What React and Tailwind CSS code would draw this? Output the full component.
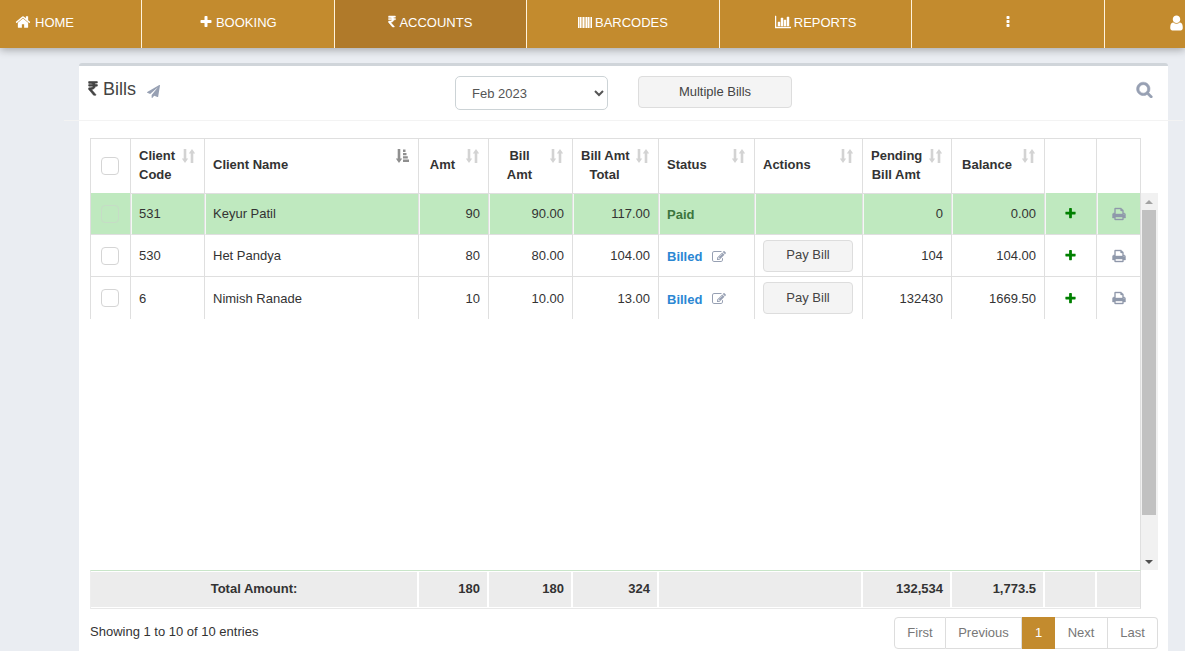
import React from "react";

const PATHS = {
  home: "M1472 992v480q0 26-19 45t-45 19h-384v-384h-256v384h-384q-26 0-45-19t-19-45v-480q0-1 .5-3t.5-3l575-474 575 474q1 2 1 6zm223-69l-62 74q-8 9-21 11h-3q-13 0-21-7l-692-577-692 577q-12 8-24 7-13-2-21-11l-62-74q-8-10-7-23.5t11-21.5l719-599q32-26 76-26t76 26l244 204v-195q0-14 9-23t23-9h192q14 0 23 9t9 23v408l219 182q10 8 11 21.5t-7 23.5z",
  plus: "M1600 736v192q0 40-28 68t-68 28h-416v416q0 40-28 68t-68 28h-192q-40 0-68-28t-28-68v-416h-416q-40 0-68-28t-28-68v-192q0-40 28-68t68-28h416v-416q0-40 28-68t68-28h192q40 0 68 28t28 68v416h416q40 0 68 28t28 68z",
  rupee: "M1345 470v102q0 14-9 23t-23 9h-168q-23 144-129 234t-276 110q167 178 459 536 14 16 4 34-8 18-29 18h-195q-16 0-25-12-306-367-498-571-9-9-9-22v-127q0-13 9.5-22.5t22.5-9.5h112q132 0 212.5-43t102.5-125h-427q-14 0-23-9t-9-23v-102q0-14 9-23t23-9h413q-57-113-268-113h-145q-13 0-22.5-9.5t-9.5-22.5v-133q0-14 9-23t23-9h832q14 0 23 9t9 23v102q0 14-9 23t-23 9h-233q47 61 64 144h171q14 0 23 9t9 23z",
  search: "M1216 832q0-185-131.5-316.5t-316.5-131.5-316.5 131.5-131.5 316.5 131.5 316.5 316.5 131.5 316.5-131.5 131.5-316.5zm512 832q0 52-38 90t-90 38q-54 0-90-38l-343-342q-179 124-399 124-143 0-273.5-55.5t-225-150-150-225-55.5-273.5 55.5-273.5 150-225 225-150 273.5-55.5 273.5 55.5 225 150 150 225 55.5 273.5q0 220-124 399l343 343q37 37 37 90z",
  plane: "M1764 11q33 24 27 64l-256 1536q-5 29-32 45-14 8-31 8-11 0-24-5l-453-185-242 295q-18 23-49 23-13 0-22-4-19-7-30.5-23.5t-11.5-36.5v-349l864-1059-1069 925-395-162q-37-14-40-55-2-40 32-59l1664-960q15-9 32-9 20 0 36 11z",
  chart: "M640 896v512h-256v-512h256zm384-512v1024h-256v-1024h256zm1024 1152v128h-2048v-1536h128v1408h1920zm-640-896v768h-256v-768h256zm384-384v1152h-256v-1152h256z",
  user: "M1536 1399q0 109-62.5 187t-150.5 78h-854q-88 0-150.5-78t-62.5-187q0-85 8.5-160.5t31.5-152 58.5-131 94-89 134.5-34.5q131 128 313 128t313-128q76 0 134.5 34.5t94 89 58.5 131 31.5 152 8.5 160.5zm-256-887q0 159-112.5 271.5t-271.5 112.5-271.5-112.5-112.5-271.5 112.5-271.5 271.5-112.5 271.5 112.5 112.5 271.5z",
  dots: "M1088 1248v192q0 40-28 68t-68 28h-192q-40 0-68-28t-28-68v-192q0-40 28-68t68-28h192q40 0 68 28t28 68zm0-512v192q0 40-28 68t-68 28h-192q-40 0-68-28t-28-68v-192q0-40 28-68t68-28h192q40 0 68 28t28 68zm0-512v192q0 40-28 68t-68 28h-192q-40 0-68-28t-28-68v-192q0-40 28-68t68-28h192q40 0 68 28t28 68z",
  print: "M448 1536h896v-256h-896v256zm0-640h896v-384h-160q-40 0-68-28t-28-68v-160h-640v640zm1152 64q0-26-19-45t-45-19-45 19-19 45 19 45 45 19 45-19 19-45zm128 0v416q0 13-9.5 22.5t-22.5 9.5h-224v160q0 40-28 68t-68 28h-960q-40 0-68-28t-28-68v-160h-224q-13 0-22.5-9.5t-9.5-22.5v-416q0-79 56.5-135.5t135.5-56.5h64v-544q0-40 28-68t68-28h672q40 0 88 20t76 48l152 152q28 28 48 76t20 88v256h64q79 0 135.5 56.5t56.5 135.5z",
  edit: "M888 1184l116-116-152-152-116 116v56h96v96h56zm440-720q-16-16-33 1l-350 350q-17 17-1 33t33-1l350-350q17-17 1-33zm80 594v190q0 119-84.5 203.5t-203.5 84.5h-832q-119 0-203.5-84.5t-84.5-203.5v-832q0-119 84.5-203.5t203.5-84.5h832q63 0 117 25 15 7 18 23 3 17-9 29l-49 49q-14 14-32 8-23-6-45-6h-832q-66 0-113 47t-47 113v832q0 66 47 113t113 47h832q66 0 113-47t47-113v-126q0-13 9-22l64-64q15-15 35-7t20 29zm-96-738l288 288-672 672h-288v-288zm444 132l-92 92-288-288 92-92q28-28 68-28t68 28l152 152q28 28 28 68t-28 68z",
};

function Icon({ name, box = "0 0 1792 1792", className, weight = 0 }) {
  return (
    <svg
      viewBox={box}
      className={`shrink-0 ${className}`}
      fill="currentColor"
      stroke="currentColor"
      strokeWidth={weight}
      aria-hidden="true"
    >
      <path d={PATHS[name]} />
    </svg>
  );
}

function Barcode() {
  return (
    <svg viewBox="0 0 14 11" className="h-[11px] w-[14px] shrink-0" fill="currentColor" aria-hidden="true">
      <path fillOpacity="0.55" d="M0 0h14v11H0z" />
      <path d="M0 0h1v11H0zM2 0h1v11H2zM5 0h1v11H5zM8 0h1v11H8zM10 0h1v11h-1zM13 0h1v11h-1z" />
    </svg>
  );
}

function SortIcon({ active }) {
  return (
    <svg
      viewBox="0 0 13 14"
      className={`absolute top-2.5 right-[9px] h-3.5 w-[13px] ${active ? "text-[#8f8f8f]" : "text-[#d3d3d3]"}`}
      fill="currentColor"
      aria-hidden="true"
    >
      <path d="M1.700 0h2.600v9.500H6.200L3 14-.2 9.500H1.700z" />
      {active ? (
        <path d="M7 .5h2.500v2.500H7zM7 4h3.500v2.300H7zM7 7.200h4.800v2.300H7zM7 10.500h6V13H7z" />
      ) : (
        <path d="M8.700 14h2.600V4.500h1.900L10 0 6.800 4.500h1.900z" />
      )}
    </svg>
  );
}

const NAV = [
  { label: "BOOKING", icon: <Icon name="plus" className="size-[14px]" /> },
  { label: "ACCOUNTS", icon: <Icon name="rupee" box="384 0 1024 1792" weight={60} className="h-[14px] w-[8px]" />, active: true },
  { label: "BARCODES", icon: <Barcode /> },
  { label: "REPORTS", icon: <Icon name="chart" box="0 0 2048 1792" weight={60} className="h-[14px] w-[16px]" /> },
  { label: "", icon: <Icon name="dots" className="size-[14px]" />, aria: "More" },
];

const COLUMNS = [
  { lines: ["Client", "Code"] },
  { lines: ["Client Name"], active: true },
  { lines: ["Amt"], center: true },
  { lines: ["Bill", "Amt"], center: true },
  { lines: ["Bill Amt", "Total"], center: true },
  { lines: ["Status"] },
  { lines: ["Actions"] },
  { lines: ["Pending", "Bill Amt"], center: true },
  { lines: ["Balance"], center: true },
];

const ROWS = [
  { code: "531", name: "Keyur Patil", amt: "90", bill: "90.00", total: "117.00", paid: true, pending: "0", balance: "0.00" },
  { code: "530", name: "Het Pandya", amt: "80", bill: "80.00", total: "104.00", pending: "104", balance: "104.00" },
  { code: "6", name: "Nimish Ranade", amt: "10", bill: "10.00", total: "13.00", pending: "132430", balance: "1669.50" },
];

function Cols({ first = "w-[40px]", last = "w-[43px]" }) {
  return (
    <colgroup>
      <col className={first} />
      <col className="w-[74px]" />
      <col />
      <col className="w-[70px]" />
      <col className="w-[84px]" />
      <col className="w-[86px]" />
      <col className="w-[96px]" />
      <col className="w-[108px]" />
      <col className="w-[89px]" />
      <col className="w-[93px]" />
      <col className="w-[52px]" />
      <col className={last} />
    </colgroup>
  );
}

function Check({ label, faint }) {
  return (
    <input
      type="checkbox"
      aria-label={label}
      className={`block size-[18px] appearance-none rounded-[4px] border ${
        faint ? "border-[#c6dcc6]" : "border-[#d5d5d5] bg-white"
      }`}
    />
  );
}

const TABLE = "w-full table-fixed border-separate border-spacing-0";
const GRAY_BTN = "h-8 rounded-[4px] border border-[#dddddd] bg-[#f4f4f4] pb-0.5 text-[#444444]";
const PAGE = "h-8 border-r border-[#dddddd] pb-0.5 text-center text-[#777777]";

export default function App() {
  return (
    <div className="flex min-h-screen flex-col bg-[#eaedf2] font-['Liberation_Sans',Arial,sans-serif] text-[13px] leading-[19px] text-[#333333]">
      <nav className="flex h-12 overflow-hidden bg-[#c38b2e] text-white shadow-[0_2px_8px_rgba(0,0,0,0.3)]">
        <a href="#home" className="flex w-[142px] shrink-0 items-center gap-1 border-r border-[#fff3dc] pb-1 pl-[15px]">
          <Icon name="home" className="size-[16px]" />
          HOME
        </a>
        {NAV.map((n, i) => (
          <a
            key={i}
            href="#nav"
            aria-label={n.aria}
            className={`flex flex-1 items-center justify-center gap-[3px] border-r border-[#fff3dc] pb-1 ${n.active ? "bg-[#b07a2a]" : ""}`}
          >
            {n.icon}
            {n.label}
          </a>
        ))}
        <a href="#profile" aria-label="Profile" className="flex w-20 shrink-0 items-center pb-0.5 pl-16">
          <Icon name="user" box="128 0 1536 1792" className="h-[18px] w-[15px]" />
        </a>
      </nav>

      <main className="mt-[15px] mr-[17px] ml-[79px] flex-1 rounded-t-[3px] border-t-[3px] border-[#d0d5da] bg-white">
        <header className="-mx-[15px] flex items-start border-b border-[#f3f3f3] px-6 pt-2.5 pb-2.5">
          <h1 className="flex h-[26px] w-[367px] shrink-0 items-center text-[18px] text-[#444444]">
            <Icon name="rupee" box="384 0 1024 1792" weight={60} className="h-[18px] w-[10px]" />
            <span className="ml-[5px]">Bills</span>
            <Icon name="plane" className="mt-1 ml-[11px] size-[13px] text-[#97a0b3]" />
          </h1>
          <select
            aria-label="Month"
            className="h-[34px] w-[153px] rounded-[5px] border border-[#ccd3d6] bg-white pl-3 text-[#555555]"
          >
            <option>Feb 2023</option>
          </select>
          <button className={`ml-[30px] w-[154px] ${GRAY_BTN}`}>Multiple Bills</button>
          <button aria-label="Search" className="mt-[5px] mr-1.5 ml-auto text-[#97a0b3]">
            <Icon name="search" className="size-[17px]" weight={60} />
          </button>
        </header>

        <section className="pt-[17px] pr-[10px] pl-[11px]">
          <div className="mr-[17px]">
            <table className={`${TABLE} border-l border-[#dfdfdf]`}>
              <Cols last="w-[44px]" />
              <thead>
                <tr className="h-14">
                  <th className="border-t border-r border-b border-[#dfdfdf] pl-2.5">
                    <Check label="Select all" />
                  </th>
                  {COLUMNS.map((c, i) => (
                    <th
                      key={i}
                      className={`relative border-t border-r border-b border-[#dfdfdf] pr-[30px] pb-[3px] pl-2 font-bold whitespace-nowrap ${
                        c.center ? "text-center" : "text-left"
                      }`}
                    >
                      {c.lines.map((l) => (
                        <div key={l}>{l}</div>
                      ))}
                      <SortIcon active={c.active} />
                    </th>
                  ))}
                  <th className="border-t border-r border-b border-[#dfdfdf]" />
                  <th className="border-t border-r border-b border-[#dfdfdf]" />
                </tr>
              </thead>
            </table>
          </div>

          <div className="-mt-px flex h-[377px]">
            <div className="min-w-0 flex-1 border-r border-[#dfdfdf]">
              <table className={`${TABLE} border-l border-[#dfdfdf]`}>
                <Cols />
                <tbody>
                  {ROWS.map((r, i) => {
                    const bottom = i < 2 ? "border-b" : "";
                    const cell = `border-r border-[#dfdfdf] pr-2 ${bottom} ${
                      r.paid ? "border-l border-l-[#f4f9f4] pl-[7px]" : "pl-2"
                    }`;
                    return (
                      <tr key={r.code} className={`h-[42px] ${r.paid ? "bg-[#bfe9bf]" : ""}`}>
                        <td className={`border-r border-[#dfdfdf] pl-2.5 ${bottom}`}>
                          <Check label={`Select ${r.name}`} faint={r.paid} />
                        </td>
                        <td className={cell}>{r.code}</td>
                        <td className={cell}>{r.name}</td>
                        <td className={`${cell} text-right`}>{r.amt}</td>
                        <td className={`${cell} text-right`}>{r.bill}</td>
                        <td className={`${cell} text-right`}>{r.total}</td>
                        <td className={`${cell} pt-0.5`}>
                          {r.paid ? (
                            <span className="font-bold text-[#3c763d]">Paid</span>
                          ) : (
                            <span className="flex items-center gap-2.5">
                              <a href="#bill" className="font-bold text-[#2b87d3]">Billed</a>
                              <button aria-label={`Edit ${r.name}`} className="text-[#97a0b3]">
                                <Icon name="edit" className="size-[14px]" />
                              </button>
                            </span>
                          )}
                        </td>
                        <td className={cell}>
                          {!r.paid && <button className={`block w-[90px] ${GRAY_BTN}`}>Pay Bill</button>}
                        </td>
                        <td className={`${cell} text-right`}>{r.pending}</td>
                        <td className={`${cell} text-right`}>{r.balance}</td>
                        <td className={cell}>
                          <button aria-label={`Add for ${r.name}`} className="mx-auto block text-[#008000]">
                            <Icon name="plus" className="size-[13px]" />
                          </button>
                        </td>
                        <td className={`border-[#dfdfdf] ${bottom} ${r.paid ? "border-l border-l-[#f4f9f4]" : ""}`}>
                          <button aria-label={`Print ${r.name}`} className="mx-auto block text-[#8f99ab]">
                            <Icon name="print" className="size-[14px]" weight={50} />
                          </button>
                        </td>
                      </tr>
                    );
                  })}
                </tbody>
              </table>
            </div>
            <div className="flex w-[17px] flex-col items-center bg-[#f1f1f1] pr-px">
              <svg viewBox="0 0 16 17" className="h-[17px] w-4 shrink-0" fill="#a3a3a3" aria-hidden="true">
                <path d="M4 11l4-4 4 4z" />
              </svg>
              <div className="h-[305px] w-3.5 bg-[#c1c1c1]" />
              <svg viewBox="0 0 16 17" className="mt-auto h-[17px] w-4 shrink-0" fill="#505050" aria-hidden="true">
                <path d="M4 7l4 4 4-4z" />
              </svg>
            </div>
          </div>

          <div className="mr-[17px] border border-t-[#c9e5c9] border-r-[#dfdfdf] border-b-[#e8e8e8] border-l-[#eeeeee]">
            <table className={TABLE}>
              <Cols />
              <tbody>
                <tr className="h-[37px] bg-[#ececec] text-right font-bold">
                  <td colSpan={3} className="border-y border-r-2 border-white pb-0.5 text-center">Total Amount:</td>
                  <td className="border-y border-r-2 border-white pr-[7px] pb-0.5">180</td>
                  <td className="border-y border-r-2 border-white pr-[7px] pb-0.5">180</td>
                  <td className="border-y border-r-2 border-white pr-[7px] pb-0.5">324</td>
                  <td colSpan={2} className="border-y border-r-2 border-white" />
                  <td className="border-y border-r-2 border-white pr-[7px] pb-0.5">132,534</td>
                  <td className="border-y border-r-2 border-white pr-[7px] pb-0.5">1,773.5</td>
                  <td className="border-y border-r-2 border-white" />
                  <td className="border-y border-white" />
                </tr>
              </tbody>
            </table>
          </div>

          <div className="mt-2 flex items-center justify-between">
            <p className="pb-[3px]">Showing 1 to 10 of 10 entries</p>
            <div className="flex">
              <button className={`${PAGE} w-[52px] rounded-l-[4px] border-y border-l`}>First</button>
              <button className={`${PAGE} w-[76px] border-y`}>Previous</button>
              <button className="h-8 w-[33px] bg-[#c38b2e] pb-0.5 text-center text-white">1</button>
              <button className={`${PAGE} w-[53px] border-y`}>Next</button>
              <button className={`${PAGE} w-[50px] rounded-r-[4px] border-y`}>Last</button>
            </div>
          </div>
        </section>
      </main>
    </div>
  );
}
